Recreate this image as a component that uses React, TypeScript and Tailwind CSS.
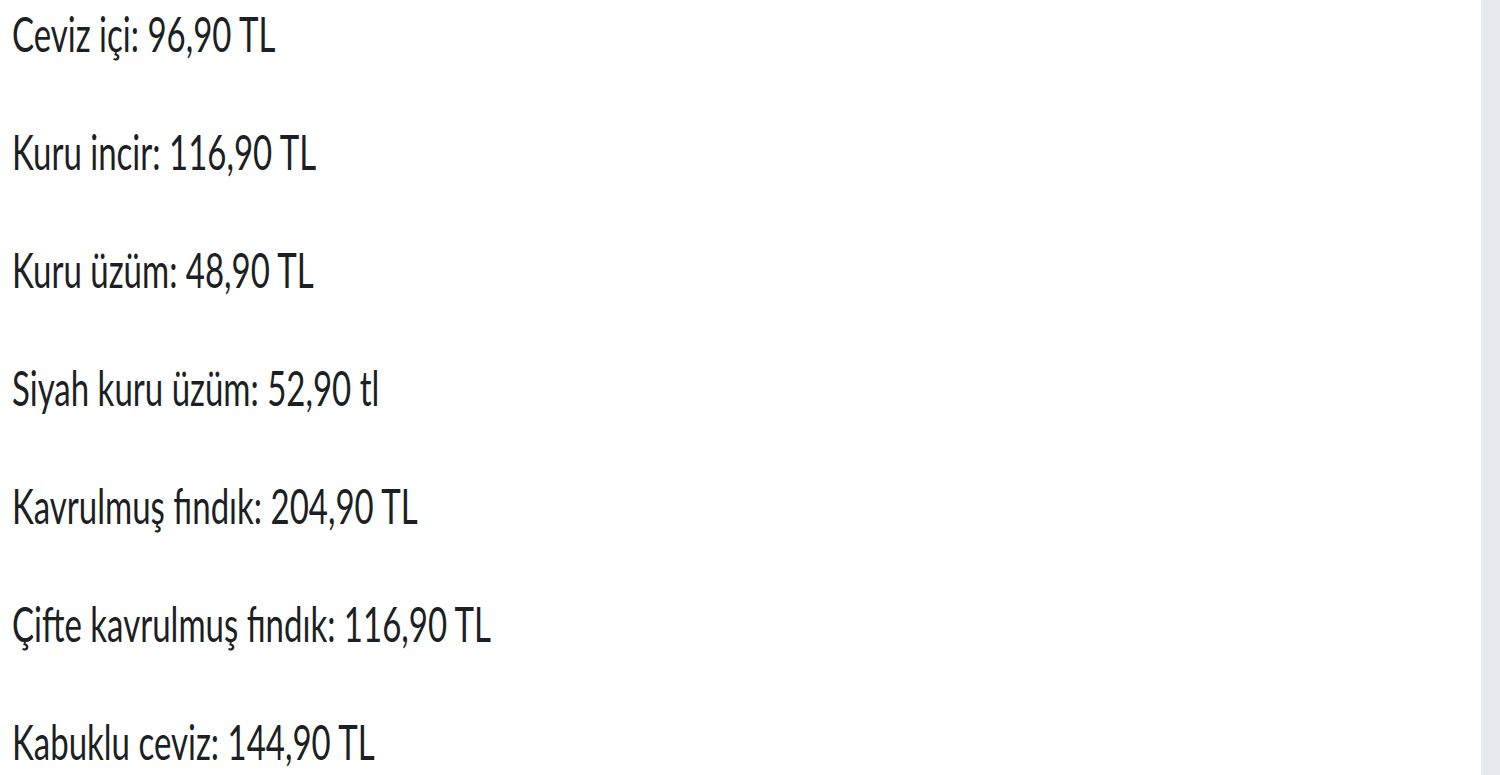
const prices = [
  'Ceviz içi: 96,90 TL',
  'Kuru incir: 116,90 TL',
  'Kuru üzüm: 48,90 TL',
  'Siyah kuru üzüm: 52,90 tl',
  'Kavrulmuş fındık: 204,90 TL',
  'Çifte kavrulmuş fındık: 116,90 TL',
  'Kabuklu ceviz: 144,90 TL',
];

export default function App() {
  return (
    <div className="flex h-[775px] w-[1500px] overflow-hidden bg-white">
      {/* Price list */}
      <div className="flex flex-1 flex-col gap-[78px] pl-[12px] pt-[13px]">
        {prices.map((line) => (
          <div key={line} className="flex h-[40px] items-center">
            <p
              className="origin-left scale-y-[1.47] whitespace-nowrap text-[33px] leading-none text-[#1c1f24]"
              style={{ fontFamily: 'Lato, "Open Sans", sans-serif' }}
            >
              {line}
            </p>
          </div>
        ))}
      </div>

      {/* Scrollbar track */}
      <div className="w-[19px] shrink-0 bg-[#e6e9ed]" />
    </div>
  );
}
